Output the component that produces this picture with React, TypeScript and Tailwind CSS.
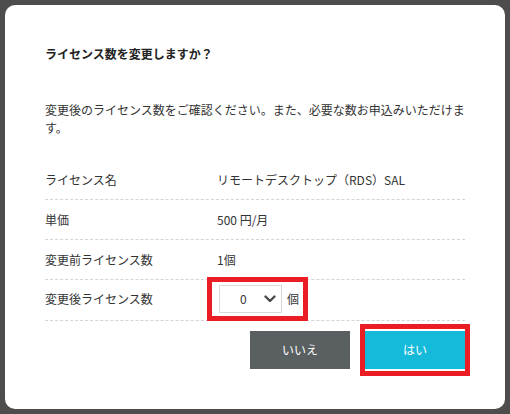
const font = { fontFamily: '"Noto Sans CJK JP", "Noto Sans", sans-serif' };

const rows = [
  { label: 'ライセンス名', value: 'リモートデスクトップ（RDS）SAL' },
  { label: '単価', value: '500 円/月' },
  { label: '変更前ライセンス数', value: '1個' },
];

function Chevron() {
  return (
    <svg width="12" height="8" viewBox="0 0 12 8" fill="none">
      <path d="M1.5 1.5 L6 6 L10.5 1.5" stroke="#4a4a4a" strokeWidth="2.4" strokeLinecap="round" strokeLinejoin="round" />
    </svg>
  );
}

export default function App() {
  return (
    <div className="h-[414px] w-[510px] bg-[#4d4d4d] p-[5px]" style={font}>
      <div className="h-[404px] w-[500px] rounded-[10px] bg-white px-[40px] pt-[40px] text-[12px] text-[#333]">
        {/* Title */}
        <h2 className="text-[12px] font-bold leading-[18px] text-[#222]">ライセンス数を変更しますか？</h2>

        {/* Description */}
        <p className="mt-[38px] leading-[18px]">
          変更後のライセンス数をご確認ください。また、必要な数お申込みいただけます。
        </p>

        {/* Table */}
        <div className="mt-[23px]">
          {rows.map((row) => (
            <div key={row.label} className="flex h-[40px] items-center border-b border-dashed border-[#d4d4d4]">
              <div className="w-[172px] shrink-0">{row.label}</div>
              <div>{row.value}</div>
            </div>
          ))}
          <div className="flex h-[41px] items-center border-b border-dashed border-[#d4d4d4] pb-[2px]">
            <div className="w-[172px] shrink-0">変更後ライセンス数</div>
            <div className="relative ml-[2px] flex items-center gap-[5px]">
              <div className="flex h-[28px] w-[63px] items-center border border-[#d9d9d9] pl-[20px] pr-[5px]">
                <span>0</span>
                <span className="ml-auto flex">
                  <Chevron />
                </span>
              </div>
              <span>個</span>
              <div className="pointer-events-none absolute -bottom-[8px] -left-[12px] -right-[9px] -top-[8px] border-[5px] border-[#ea1c24]" />
            </div>
          </div>
        </div>

        {/* Buttons */}
        <div className="mt-[10px] flex justify-end gap-[15px]">
          <button className="h-[38px] w-[100px] bg-[#5a6062] text-[12px] text-white">いいえ</button>
          <div className="relative">
            <button className="h-[38px] w-[100px] bg-[#15b9d9] text-[12px] text-white">はい</button>
            <div className="pointer-events-none absolute -bottom-[7px] -left-[5px] -right-[5px] -top-[7px] border-[5px] border-[#ea1c24]" />
          </div>
        </div>
      </div>
    </div>
  );
}
